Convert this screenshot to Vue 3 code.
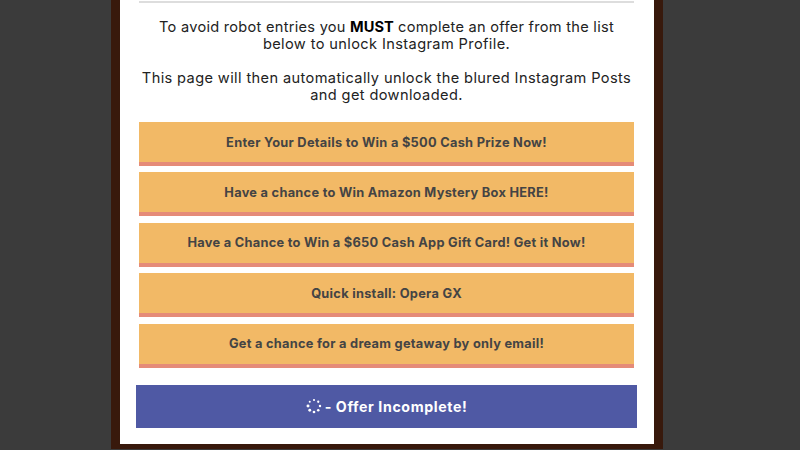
<template>
  <div class="page">
    <div class="modal">
      <hr class="divider" />
      <p class="intro">
        <span class="tight">To avoid robot entries you <strong>MUST</strong> complete an offer from the list</span><br />
        below to unlock Instagram Profile.<br /><br />
        This page will then automatically unlock the blured Instagram Posts<br />
        and get downloaded.
      </p>
      <div class="offers">
        <a v-for="offer in offers" :key="offer" class="offer" href="#">{{ offer }}</a>
      </div>
      <div class="status">
        <svg class="spinner" width="16" height="16" viewBox="0 0 16 16">
          <circle v-for="dot in dots" :key="dot.x" :cx="dot.x" :cy="dot.y" :r="dot.r" fill="#fff" />
        </svg>
        <span>- Offer Incomplete!</span>
      </div>
    </div>
  </div>
</template>

<script setup>
const offers = [
  'Enter Your Details to Win a $500 Cash Prize Now!',
  'Have a chance to Win Amazon Mystery Box HERE!',
  'Have a Chance to Win a $650 Cash App Gift Card! Get it Now!',
  'Quick install: Opera GX',
  'Get a chance for a dream getaway by only email!',
]

// spinner dots, biggest at the top right
const dots = Array.from({ length: 8 }, (_, i) => {
  const angle = (i * Math.PI) / 4
  return {
    x: 8 + 6 * Math.cos(angle),
    y: 8 + 6 * Math.sin(angle),
    r: 1 + ((i + 3) % 8) * 0.07,
  }
})
</script>

<style scoped>
.page {
  width: 800px;
  height: 450px;
  overflow: hidden;
  background: #3b3b3b;
  padding-left: 111px;
  box-sizing: border-box;
  font-family: "Inter", "Open Sans", sans-serif;
}

.modal {
  width: 501px;
  height: 443px;
  background: #fff;
  border: 9px solid #38190c;
  border-top: 0;
  border-bottom-width: 5px;
  padding: 1px 17px 0 16px;
  box-sizing: content-box;
  display: flex;
  flex-direction: column;
  align-items: center;
}

.divider {
  width: 495px;
  height: 2px;
  margin: 0;
  border: 0;
  background: #ddd;
  flex-shrink: 0;
}

.intro {
  margin: 16px 0 0;
  width: 501px;
  font-size: 14.6px;
  line-height: 17px;
  letter-spacing: 0.38px;
  color: #222;
  text-align: center;
  white-space: nowrap;
}

.tight {
  letter-spacing: 0.27px;
}

.intro strong {
  color: #000;
  font-weight: 700;
  letter-spacing: 0;
}

.offers {
  margin-top: 18px;
  width: 495px;
  display: flex;
  flex-direction: column;
  gap: 6.4px;
}

.offer {
  height: 40px;
  border-bottom: 4px solid #e58b78;
  background: #f2b966;
  color: #444;
  font-size: 12.8px;
  font-weight: 700;
  letter-spacing: 0.28px;
  text-decoration: none;
  display: flex;
  align-items: center;
  justify-content: center;
}

.status {
  margin-top: 17.4px;
  width: 501px;
  height: 43px;
  background: #4f59a4;
  color: #fff;
  font-size: 14.2px;
  font-weight: 700;
  letter-spacing: 0.6px;
  display: flex;
  align-items: center;
  justify-content: center;
  gap: 3px;
  flex-shrink: 0;
}

.spinner {
  flex-shrink: 0;
}
</style>

<style>
html,
body {
  margin: 0;
  overflow: hidden;
}
</style>
